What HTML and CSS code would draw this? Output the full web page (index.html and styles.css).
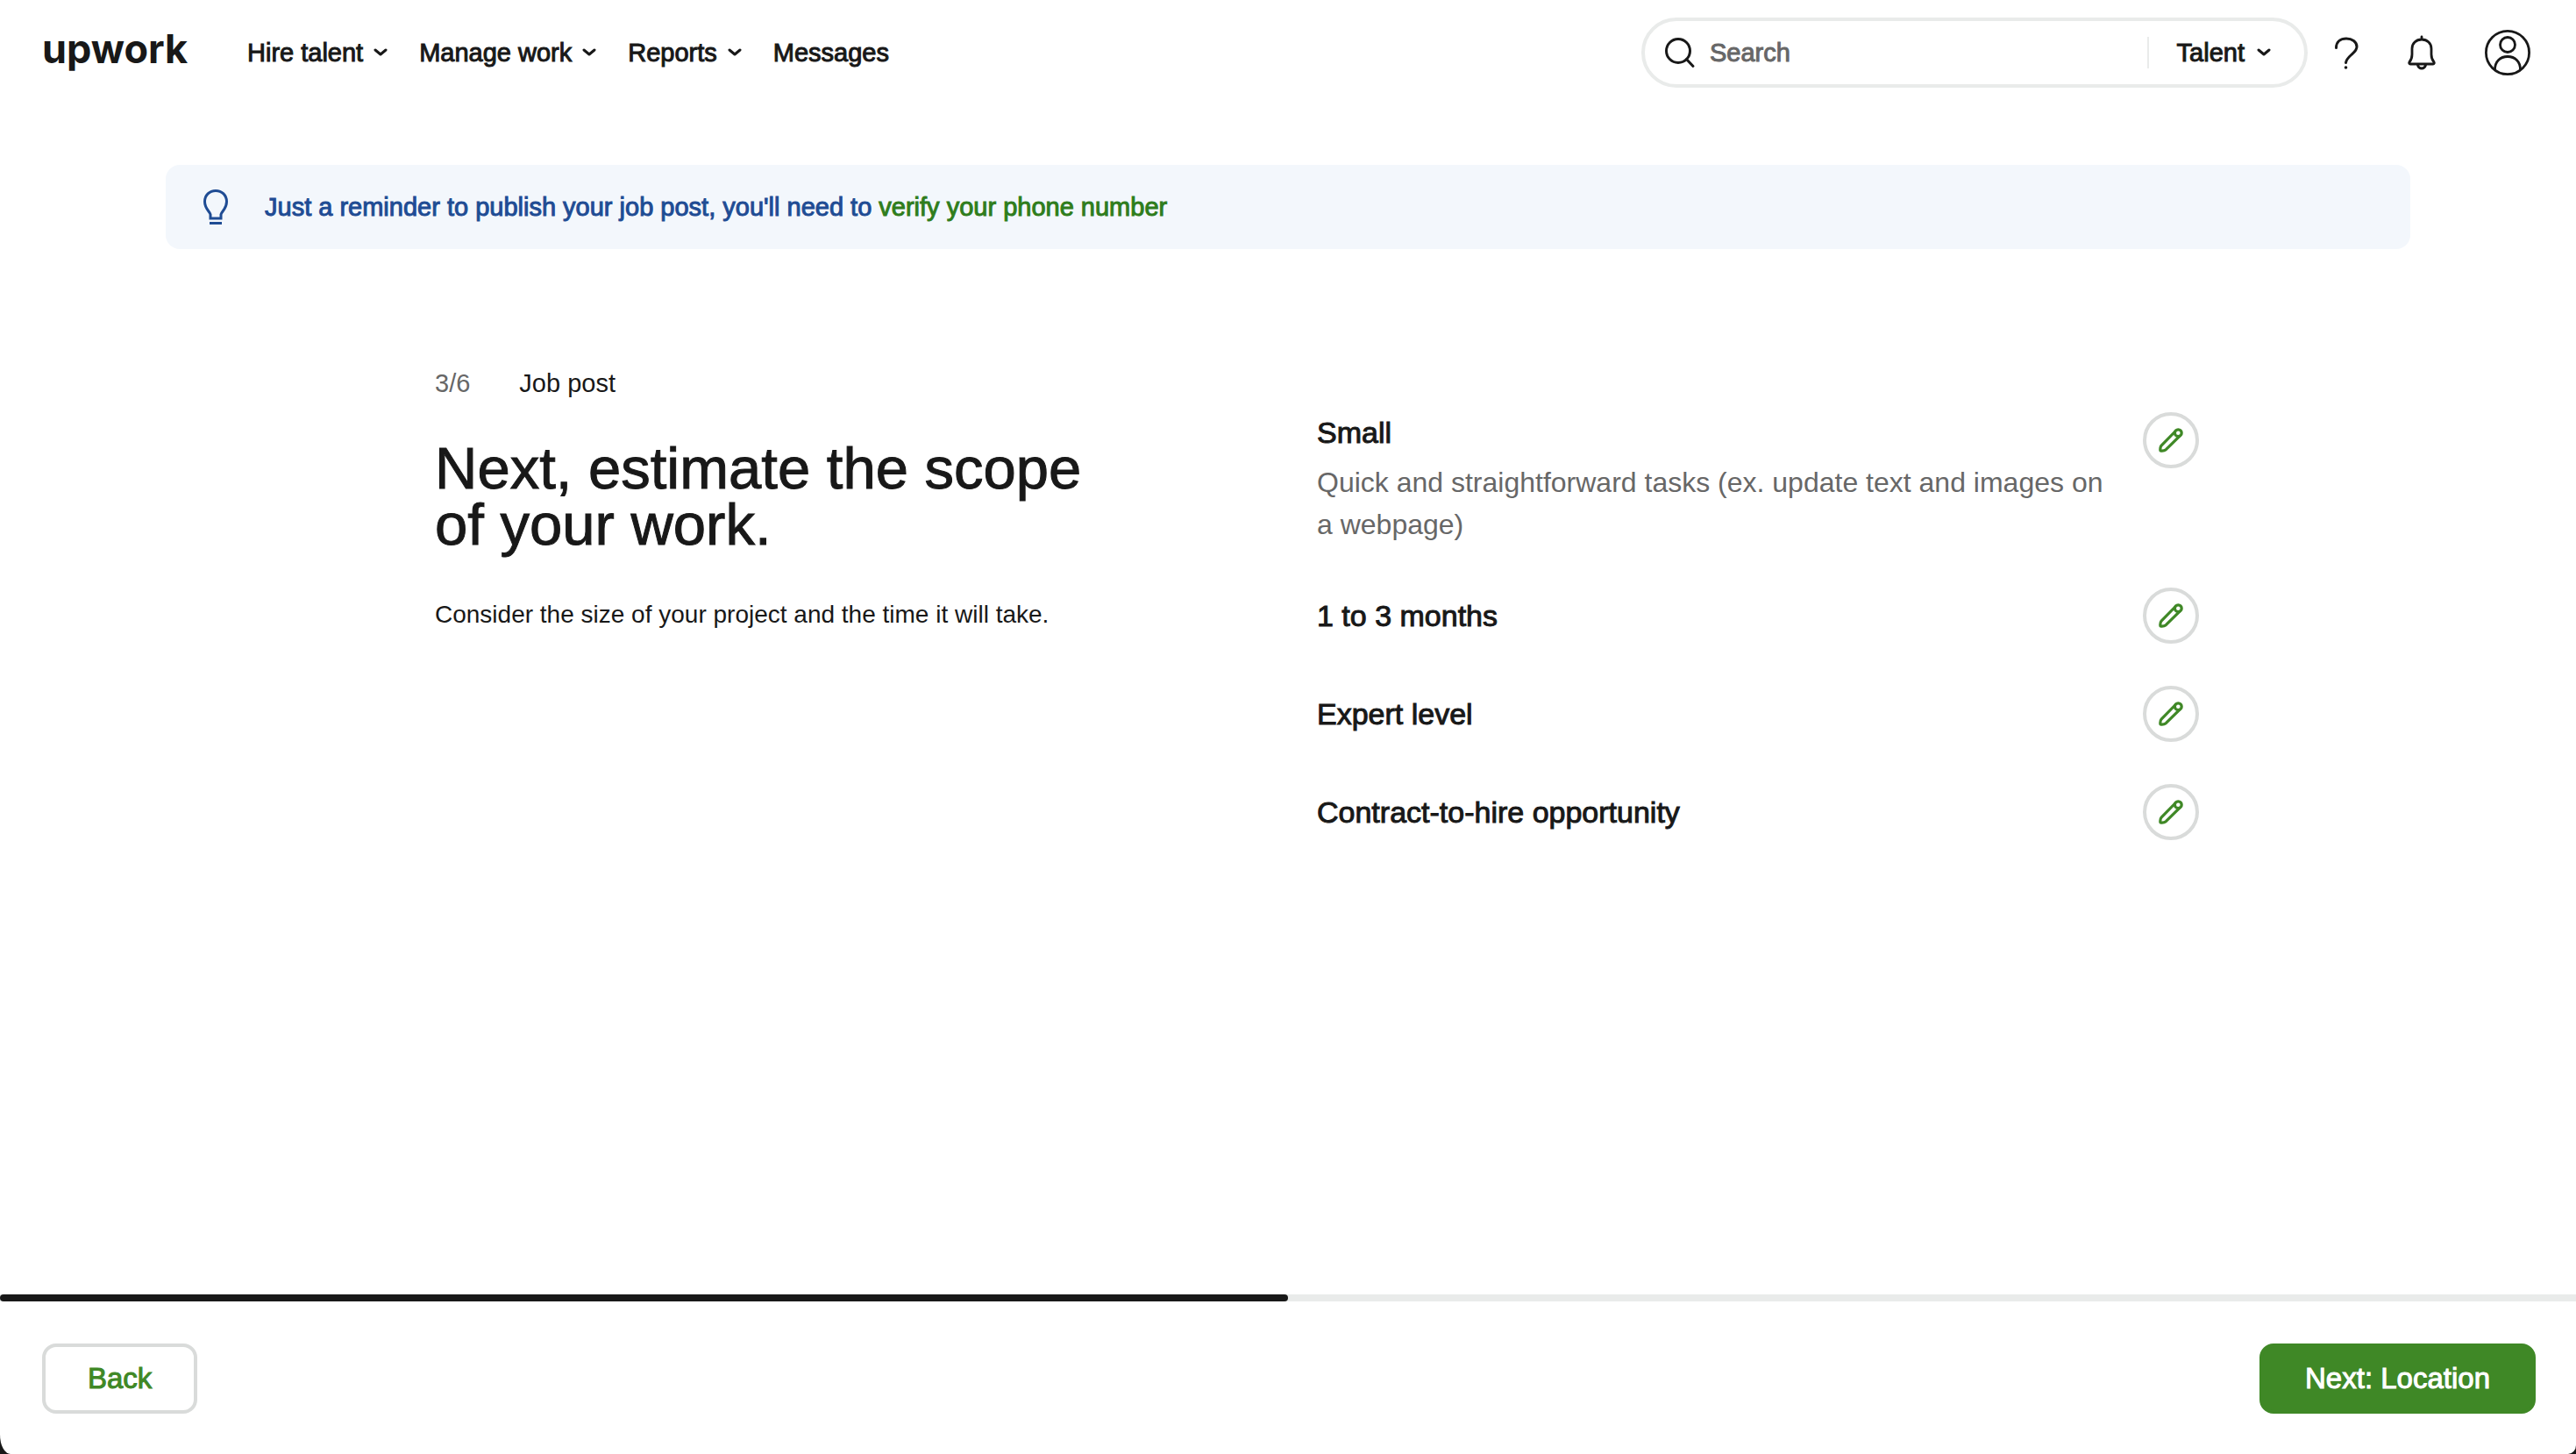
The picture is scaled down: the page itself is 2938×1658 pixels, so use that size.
FILE: index.html
```html
<!DOCTYPE html>
<html lang="en">
<head>
<meta charset="utf-8">
<meta name="viewport" content="width=device-width, initial-scale=1">
<title>Job post - Scope</title>
<link rel="stylesheet" href="styles.css">
</head>
<body>
<svg class="sprite" aria-hidden="true">
  <symbol id="chevron" viewBox="0 0 16 10"><path d="M2 2l6 5 6-5" fill="none" stroke="currentColor" stroke-width="3" stroke-linecap="round" stroke-linejoin="round"/></symbol>
  <symbol id="pencil" viewBox="0 0 28 28"><g fill="none" stroke="currentColor" stroke-width="3.2" stroke-linejoin="round"><path d="M19.3 3.500 3.300 19.800C1.900 21.600 1.700 24.400 2 26c1.700.3 4.500.1 6.300-1.300L24.600 8.600"/><circle cx="22.300" cy="5.700" r="3.900"/></g></symbol>
</svg>
<div class="page">
  <header class="header">
    <a class="logo" href="#">upwork</a>
    <nav class="nav" aria-label="Main">
      <button class="nav-item" type="button">Hire talent<svg class="chevron"><use href="#chevron"/></svg></button>
      <button class="nav-item" type="button">Manage work<svg class="chevron"><use href="#chevron"/></svg></button>
      <button class="nav-item" type="button">Reports<svg class="chevron"><use href="#chevron"/></svg></button>
      <a class="nav-item" href="#">Messages</a>
    </nav>
    <form class="search" role="search">
      <svg class="search-icon" viewBox="0 0 36 36" fill="none" stroke="currentColor" stroke-width="3" stroke-linecap="round"><circle cx="16" cy="16" r="13.500"/><path d="M25.500 25.500l7.500 8"/></svg>
      <input class="search-input" type="search" placeholder="Search" aria-label="Search">
      <button class="search-type" type="button">Talent<svg class="chevron"><use href="#chevron"/></svg></button>
    </form>
    <div class="tools">
      <button class="tool" type="button" aria-label="Help">
        <svg class="help-icon" viewBox="0 0 28 38"><path d="M2.500 13.500C2.500 6.500 7.500 3 14 3s12 3.500 12 9.200c0 4.300-3 6.300-6.300 9.300-3.700 3.300-5.700 5.500-6.200 9" fill="none" stroke="currentColor" stroke-width="3" stroke-linecap="round"/><circle cx="13.500" cy="36" r="1.800" fill="currentColor"/></svg>
      </button>
      <button class="tool" type="button" aria-label="Notifications">
        <svg class="bell-icon" viewBox="0 0 32 40" fill="none" stroke="currentColor" stroke-width="2.800" stroke-linecap="round" stroke-linejoin="round"><path d="M16 2v3M16 5C9.500 5 5 9.500 5 15.500v6.500c0 4-.5 6-3 8.800-.6.900-.2 2.200 1 2.200h26c1.200 0 1.600-1.300 1-2.200-2.500-2.800-3-4.800-3-8.800v-6.500C27 9.500 22.500 5 16 5zM11.500 34.500c.8 2.300 2.300 3.500 4.500 3.500s3.700-1.200 4.500-3.500"/></svg>
      </button>
      <button class="tool" type="button" aria-label="Account">
        <svg class="account-icon" viewBox="0 0 52 52" fill="none" stroke="currentColor" stroke-width="2.800"><circle cx="26" cy="26" r="24.600"/><circle cx="26" cy="17" r="8.500"/><path d="M11.500 45.500C11.500 36 17.500 30.500 26 30.500S40.500 36 40.500 45.500"/></svg>
      </button>
    </div>
  </header>

  <div class="notice">
    <svg class="bulb-icon" viewBox="0 0 28 40" fill="none" stroke="currentColor" stroke-width="3"><path d="M8 33v-4.500C7.500 25.500 1.500 22 1.500 14 1.500 6.500 7 1.500 14 1.500S26.500 6.500 26.500 14c0 8-6 11.500-6.500 14.500V33z"/><path d="M7 38.500h14"/></svg>
    <p class="notice-text">Just a reminder to publish your job post, you'll need to <a class="notice-link" href="#">verify your phone number</a></p>
  </div>

  <main class="content">
    <section class="intro">
      <p class="step"><span class="step-count">3/6</span><span>Job post</span></p>
      <h1 class="title">Next, estimate the scope<br>of your work.</h1>
      <p class="hint">Consider the size of your project and the time it will take.</p>
    </section>
    <section class="answers" aria-label="Scope">
      <div class="answer answer-long">
        <div class="answer-body">
          <h2 class="answer-title">Small</h2>
          <p class="answer-text">Quick and straightforward tasks (ex. update text and images on a webpage)</p>
        </div>
        <button class="edit" type="button" aria-label="Edit size"><svg class="pencil"><use href="#pencil"/></svg></button>
      </div>
      <div class="answer">
        <h2 class="answer-title">1 to 3 months</h2>
        <button class="edit" type="button" aria-label="Edit duration"><svg class="pencil"><use href="#pencil"/></svg></button>
      </div>
      <div class="answer">
        <h2 class="answer-title">Expert level</h2>
        <button class="edit" type="button" aria-label="Edit experience level"><svg class="pencil"><use href="#pencil"/></svg></button>
      </div>
      <div class="answer">
        <h2 class="answer-title">Contract-to-hire opportunity</h2>
        <button class="edit" type="button" aria-label="Edit hire type"><svg class="pencil"><use href="#pencil"/></svg></button>
      </div>
    </section>
  </main>

  <footer class="footer">
    <div class="progress" role="progressbar" aria-label="Job post progress" aria-valuemin="0" aria-valuemax="6" aria-valuenow="3"><div class="progress-bar" style="width: 50%"></div></div>
    <div class="actions">
      <button class="button button-outline" type="button">Back</button>
      <button class="button button-primary" type="button">Next: Location</button>
    </div>
  </footer>
</div>
</body>
</html>
```
FILE: styles.css
```css
:root {
  --ink: #181818;
  --muted: #676767;
  --line: #e9ebea;
  --border: #d9dbda;
  --green: #3f8826;
  --blue: #1f4c94;
}

* {
  box-sizing: border-box;
}

body {
  margin: 0;
  background: var(--ink);
  color: var(--ink);
  font: 28px/42px "Liberation Sans", Arial, sans-serif;
}

h1,
h2,
p {
  margin: 0;
  font-weight: 400;
}

a {
  color: inherit;
  text-decoration: none;
}

button {
  border: 0;
  padding: 0;
  background: none;
  color: inherit;
  font: inherit;
  cursor: pointer;
}

svg {
  display: block;
  flex: none;
}

.sprite {
  position: absolute;
  width: 0;
  height: 0;
}

.page {
  display: flex;
  flex-direction: column;
  min-height: 100vh;
  background: #fff;
  border-radius: 0 0 9px 12px / 0 0 10px 22px;
}

/* Header */
.header {
  display: flex;
  align-items: center;
  height: 120px;
  padding: 0 48px;
  font-size: 29px;
}

.logo {
  width: 234px;
  padding-bottom: 8px;
  font: 700 45px/56px Inter, sans-serif;
}

.nav {
  display: flex;
  gap: 36px;
  margin-right: auto;
}

.nav-item,
.search-type {
  display: flex;
  align-items: center;
  gap: 12px;
  -webkit-text-stroke: 1px currentColor;
}

.chevron {
  width: 16px;
  height: 10px;
}

.search {
  display: flex;
  align-items: center;
  width: 760px;
  height: 80px;
  padding: 0 38px 0 22px;
  border: 4px solid var(--line);
  border-radius: 40px;
}

.search-icon {
  width: 36px;
  height: 36px;
}

.search-input {
  flex: 1;
  min-width: 0;
  padding: 0 16px;
  border: 0;
  outline: 0;
  background: none;
  font: inherit;
}

.search-input::placeholder {
  color: var(--muted);
  opacity: 1;
  -webkit-text-stroke: 1px var(--muted);
}

.search-type {
  gap: 14px;
  height: 36px;
  padding-left: 32px;
  border-left: 2px solid var(--line);
}

.tools {
  display: flex;
  align-items: center;
  gap: 56px;
  margin: 0 4px 0 30px;
}

.help-icon {
  width: 28px;
  height: 38px;
}

.bell-icon {
  width: 32px;
  height: 40px;
}

.account-icon {
  width: 52px;
  height: 52px;
}

/* Reminder */
.notice {
  display: flex;
  align-items: center;
  gap: 42px;
  width: calc(100% - 96px);
  max-width: 2560px;
  min-height: 96px;
  margin: 68px auto 0;
  padding: 0 43px;
  border-radius: 16px;
  background: #f3f7fc;
  color: var(--blue);
  font-size: 29px;
  -webkit-text-stroke: 1px currentColor;
}

.bulb-icon {
  width: 28px;
  height: 40px;
}

.notice-link {
  color: #2f7d1c;
}

/* Content */
.content {
  display: grid;
  grid-template-columns: 1fr 1fr;
  width: 100%;
  max-width: 2560px;
  margin: 0 auto;
  padding: 132px 241px 48px 307px;
}

.step {
  display: flex;
  gap: 56px;
  margin-bottom: 44px;
  font-size: 29px;
}

.step-count {
  color: var(--muted);
}

.title {
  margin-bottom: 50px;
  font-size: 67px;
  line-height: 64px;
  -webkit-text-stroke: 1px currentColor;
}

.answers {
  display: flex;
  flex-direction: column;
  gap: 48px;
  padding-top: 54px;
}

.answer {
  display: flex;
  align-items: center;
  justify-content: space-between;
  gap: 24px;
}

.answer-long {
  align-items: flex-start;
}

.answer-title {
  font-size: 34px;
  line-height: 46px;
  -webkit-text-stroke: 1px currentColor;
}

.answer-text {
  margin-top: 10px;
  color: var(--muted);
  font-size: 32px;
  line-height: 48px;
}

.edit {
  display: flex;
  flex: none;
  align-items: center;
  justify-content: center;
  width: 64px;
  height: 64px;
  border: 4px solid var(--border);
  border-radius: 50%;
  color: var(--green);
}

.pencil {
  width: 28px;
  height: 28px;
}

/* Footer */
.footer {
  margin-top: auto;
}

.progress {
  height: 8px;
  background: var(--line);
}

.progress-bar {
  height: 8px;
  border-radius: 4px;
  background: var(--ink);
}

.actions {
  display: flex;
  justify-content: space-between;
  padding: 48px 46px 46px 48px;
}

.button {
  height: 80px;
  padding: 0 48px;
  border: 4px solid transparent;
  border-radius: 16px;
  font-size: 33px;
  -webkit-text-stroke: 1px currentColor;
}

.button-outline {
  border-color: var(--border);
  color: var(--green);
}

.button-primary {
  border-color: var(--green);
  background: var(--green);
  color: #fff;
}
```
